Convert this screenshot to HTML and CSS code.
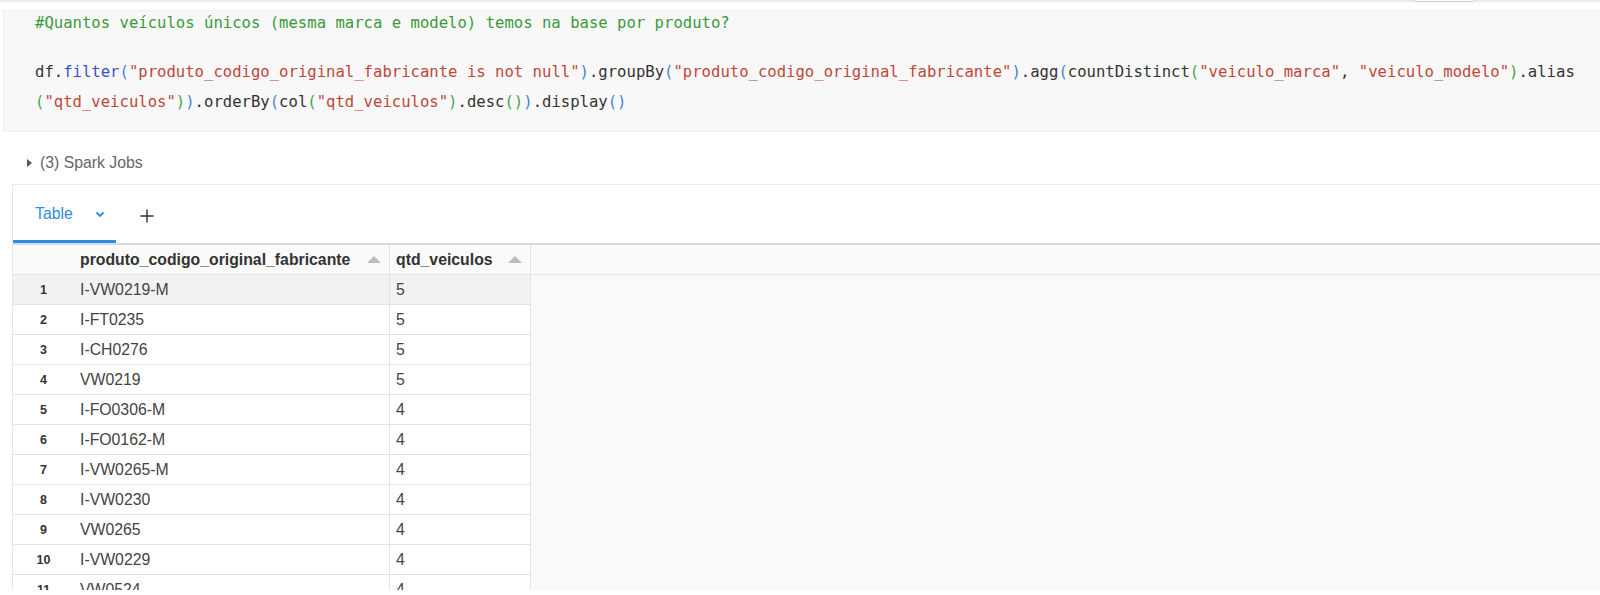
FILE: index.html
```html
<!DOCTYPE html>
<html lang="pt">
<head>
<meta charset="utf-8">
<title>Notebook</title>
<link rel="stylesheet" href="styles.css">
</head>
<body>
<div class="page">
  <div class="prev-cell"><div class="prev-btn"></div></div>
  <div class="code-cell">
    <div class="code">
      <div class="line first"><span class="c">#Quantos veículos únicos (mesma marca e modelo) temos na base por produto?</span></div>
      <div class="line blank"></div>
      <div class="line">df.<span class="b">filter</span><span class="p1">(</span><span class="s">"produto_codigo_original_fabricante is not null"</span><span class="p1">)</span>.groupBy<span class="p1">(</span><span class="s">"produto_codigo_original_fabricante"</span><span class="p1">)</span>.agg<span class="p1">(</span>countDistinct<span class="p2">(</span><span class="s">"veiculo_marca"</span>, <span class="s">"veiculo_modelo"</span><span class="p2">)</span>.alias</div>
      <div class="line"><span class="p2">(</span><span class="s">"qtd_veiculos"</span><span class="p2">)</span><span class="p1">)</span>.orderBy<span class="p1">(</span>col<span class="p2">(</span><span class="s">"qtd_veiculos"</span><span class="p2">)</span>.desc<span class="p2">()</span><span class="p1">)</span>.display<span class="p1">()</span></div>
    </div>
  </div>
  <div class="jobs"><span class="tri"></span><span>(3) Spark Jobs</span></div>
  <div class="result">
    <div class="tabs">
      <div class="tab active">
        <span>Table</span>
        <svg class="chev" width="10" height="7" viewBox="0 0 10 7"><polyline points="1.5,1.5 5,5 8.5,1.5" fill="none" stroke="#2d8ce4" stroke-width="1.8"/></svg>
      </div>
      <div class="plus">
        <svg width="14" height="14" viewBox="0 0 14 14"><path d="M7 0.5V13.5M0.5 7H13.5" stroke="#333" stroke-width="1.4" fill="none"/></svg>
      </div>
    </div>
    <div class="grid">
      <div class="row hdr">
        <div class="cell num"></div>
        <div class="cell col"><span>produto_codigo_original_fabricante</span><span class="sort"></span></div>
        <div class="cell col"><span>qtd_veiculos</span><span class="sort"></span></div>
        <div class="fill"></div>
      </div>
      <div class="row hover"><div class="cell num">1</div><div class="cell col">I-VW0219-M</div><div class="cell col">5</div><div class="fill"></div></div>
      <div class="row"><div class="cell num">2</div><div class="cell col">I-FT0235</div><div class="cell col">5</div><div class="fill"></div></div>
      <div class="row"><div class="cell num">3</div><div class="cell col">I-CH0276</div><div class="cell col">5</div><div class="fill"></div></div>
      <div class="row"><div class="cell num">4</div><div class="cell col">VW0219</div><div class="cell col">5</div><div class="fill"></div></div>
      <div class="row"><div class="cell num">5</div><div class="cell col">I-FO0306-M</div><div class="cell col">4</div><div class="fill"></div></div>
      <div class="row"><div class="cell num">6</div><div class="cell col">I-FO0162-M</div><div class="cell col">4</div><div class="fill"></div></div>
      <div class="row"><div class="cell num">7</div><div class="cell col">I-VW0265-M</div><div class="cell col">4</div><div class="fill"></div></div>
      <div class="row"><div class="cell num">8</div><div class="cell col">I-VW0230</div><div class="cell col">4</div><div class="fill"></div></div>
      <div class="row"><div class="cell num">9</div><div class="cell col">VW0265</div><div class="cell col">4</div><div class="fill"></div></div>
      <div class="row"><div class="cell num">10</div><div class="cell col">I-VW0229</div><div class="cell col">4</div><div class="fill"></div></div>
      <div class="row"><div class="cell num">11</div><div class="cell col">VW0524</div><div class="cell col">4</div><div class="fill"></div></div>
      <div class="row"><div class="cell num">12</div><div class="cell col">I-VW0201</div><div class="cell col">4</div><div class="fill"></div></div>
    </div>
  </div>
</div>
</body>
</html>
```
FILE: styles.css
```css
* { box-sizing: border-box; }
html, body { margin: 0; padding: 0; background: #fff; }
body { width: 1600px; height: 595px; overflow: hidden; font-family: "Liberation Sans", Arial, sans-serif; color: #333; }
.page { position: relative; height: 595px; overflow: hidden; }

.prev-cell { height: 10px; position: relative; background: linear-gradient(#e4e4e4, #fff 3px); }
.prev-btn { position: absolute; left: 1411px; top: -20px; width: 66px; height: 22px; border: 1px solid #cfcfcf; border-radius: 5px; background: #fff; }

.code-cell { margin-left: 3px; height: 122px; background: #f8f8f8; border: 1px solid #f0f0f0; border-right: none; padding: 0 0 0 31px; }
.code { font-family: "DejaVu Sans Mono", "Liberation Mono", monospace; font-size: 15.6px; color: #333; }
.line { height: 30px; line-height: 30px; white-space: pre; }
.line.first { height: 24px; line-height: 24px; }
.line.blank { height: 22px; }
.c { color: #3a9a3a; }
.s { color: #c0463a; }
.b { color: #3553c4; }
.p1 { color: #4a7fdc; }
.p2 { color: #46a54a; }

.jobs { height: 52px; display: flex; align-items: center; padding-left: 27px; padding-top: 10px; font-size: 15.8px; color: #666; gap: 8px; }
.tri { width: 0; height: 0; border-top: 4px solid transparent; border-bottom: 4px solid transparent; border-left: 5px solid #555; }

.result { margin-left: 12px; border-left: 1px solid #e6e6e6; border-top: 1px solid #ebebeb; }
.tabs { height: 58px; display: flex; align-items: stretch; }
.tab { width: 103px; display: flex; align-items: center; padding-left: 22px; gap: 22px; color: #2d8ce4; font-size: 15.8px; border-bottom: 3px solid #2d8ce4; padding-top: 3px; }
.chev { margin-top: 1px; }
.plus { display: flex; align-items: center; padding-left: 24px; padding-top: 3px; }

.grid { height: 347px; overflow: hidden; border-top: 2px solid #d9d9d9; background: #f9f9f9; }
.row { display: grid; grid-template-columns: 61px 316px 141px 1fr; height: 30px; }
.cell { display: flex; align-items: center; background: #fff; border-bottom: 1px solid #e4e4e4; font-size: 15.8px; color: #444; }
.cell.col { border-right: 1px solid #e4e4e4; padding-left: 6px; }
.cell.num { justify-content: center; font-size: 12.5px; font-weight: bold; color: #333; }
.fill { background: #f9f9f9; }
.hover .cell { background: #f2f2f2; }

.hdr .cell, .hdr .fill { background: #fafafa; border-bottom: 1px solid #e4e4e4; }
.hdr .cell.col { font-weight: bold; color: #333; justify-content: space-between; padding-right: 8px; }
.sort { width: 0; height: 0; border-left: 7px solid transparent; border-right: 7px solid transparent; border-bottom: 7px solid #bdbdbd; }
```
